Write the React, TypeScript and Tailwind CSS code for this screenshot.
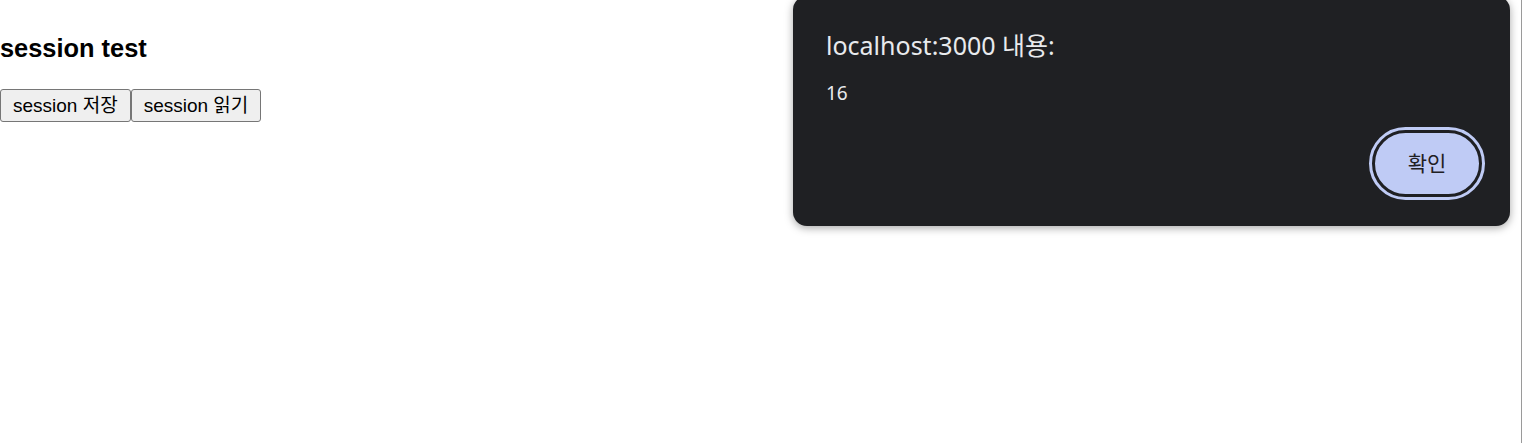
import React from 'react';

const sans = '"Liberation Sans", "Noto Sans CJK KR", sans-serif';

export default function App() {
  return (
    <div className="relative h-[443px] w-full overflow-hidden bg-white border-r border-[#9a9a9a]">
      <div className="pt-[33px]" style={{ fontFamily: sans }}>
        <h3 className="text-[25.4px] font-bold leading-[30px] text-black">session test</h3>
        <div className="mt-[26px] flex">
          <button className="h-[33px] px-[12px] text-[19px] leading-[23px] text-black bg-[#efefef] border border-[#767676] rounded-[3px]">
            session 저장
          </button>
          <button className="h-[33px] px-[12px] text-[19px] leading-[23px] text-black bg-[#efefef] border border-[#767676] rounded-[3px]">
            session 읽기
          </button>
        </div>
      </div>

      {/* alert dialog */}
      <div
        className="absolute left-[793px] top-[-4px] w-[717px] h-[230px] rounded-[14px] bg-[#1f2023] shadow-[0_2px_8px_rgba(0,0,0,0.35)] px-[33px] pt-[34px]"
        style={{ fontFamily: '"Noto Sans", "Noto Sans CJK KR", sans-serif' }}
      >
        <div className="text-[25px] leading-[30px] text-[#e8eaed]">localhost:3000 내용:</div>
        <div className="mt-[21px] text-[19px] leading-[24px] text-[#e8eaed]">16</div>
        <div className="mt-[25px] flex justify-end">
          <button className="mr-[-5px] h-[67px] w-[110px] rounded-full bg-[#bfcbf5] border-[3px] border-[#1f2023] outline outline-[3px] outline-[#bfcbf5] text-[21px] text-[#1f2023]">
            확인
          </button>
        </div>
      </div>
    </div>
  );
}
